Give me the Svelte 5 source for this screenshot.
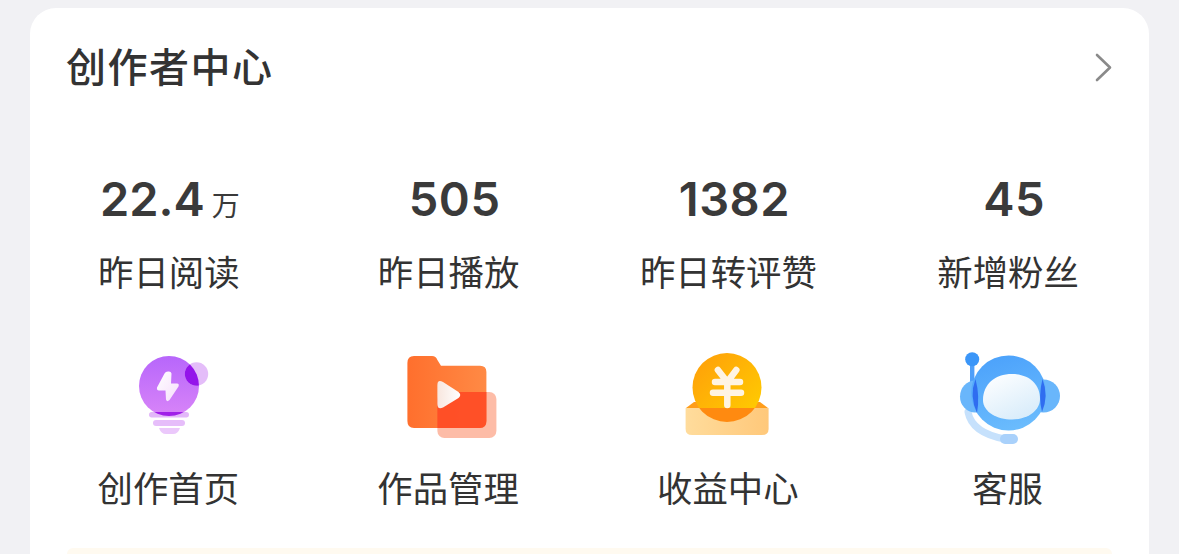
<script>
  const stats = [
    { value: '22.4', unit: '万', label: '昨日阅读' },
    { value: '505', label: '昨日播放' },
    { value: '1382', label: '昨日转评赞' },
    { value: '45', label: '新增粉丝' }
  ];
</script>

<div class="page">
  <section class="card">
    <header class="head">
      <h2>创作者中心</h2>
      <svg class="arrow" width="20" height="32" viewBox="0 0 20 32" fill="none">
        <path d="M3 3 L16 15.5 L3 28" stroke="#8a8a8a" stroke-width="2.6" stroke-linecap="round" stroke-linejoin="round" />
      </svg>
    </header>

    <div class="stats">
      {#each stats as s}
        <div class="stat">
          <div class="num" class:plain={!s.unit}>{s.value}{#if s.unit}<span class="unit">{s.unit}</span>{/if}</div>
          <div class="label">{s.label}</div>
        </div>
      {/each}
    </div>

    <div class="tools">
      <div class="tool">
        <svg width="80" height="100" viewBox="0 0 80 100">
          <defs>
            <linearGradient id="bulb" x1="0" y1="0" x2="0" y2="1">
              <stop offset="0" stop-color="#b766fb" />
              <stop offset="1" stop-color="#d884f8" />
            </linearGradient>
            <linearGradient id="bolt" x1="0" y1="0" x2="1" y2="1">
              <stop offset="0" stop-color="#ffffff" />
              <stop offset="1" stop-color="#f6ddfc" />
            </linearGradient>
            <clipPath id="bulbClip"><circle cx="39" cy="36" r="30" /></clipPath>
          </defs>
          <circle cx="39" cy="36" r="30" fill="url(#bulb)" />
          <circle cx="66.5" cy="24" r="11.7" fill="#e4bdf9" />
          <g clip-path="url(#bulbClip)"><circle cx="66.5" cy="24" r="11.7" fill="#9414ea" /></g>
          <path d="M34.5 23.5 L27 37.5 Q26.5 40.5 29 40.5 H35.5 L36 49.5 Q37 52.5 39.5 50 L48.5 36.5 Q49.5 33.5 47 33.5 H41 L41.5 23.5 Q41 21 38 21.5 Q35.5 21.5 34.5 23.5Z" fill="url(#bolt)" />
          <rect x="19" y="62" width="40" height="5.5" rx="2.7" fill="#e3b8f9" />
          <g clip-path="url(#bulbClip)"><rect x="19" y="62" width="40" height="5.5" fill="#a020e8" /></g>
          <rect x="23" y="70" width="32" height="6" rx="3" fill="#e6bdfa" />
          <path d="M29 78 H50 Q48 84 43 84 H36 Q31 84 29 78Z" fill="#ebc8fb" />
        </svg>
        <span>创作首页</span>
      </div>

      <div class="tool">
        <svg width="96" height="100" viewBox="0 0 96 100">
          <defs>
            <linearGradient id="folder" x1="0" y1="0" x2="1" y2="0">
              <stop offset="0" stop-color="#ff6f2d" />
              <stop offset="1" stop-color="#ff8a45" />
            </linearGradient>
            <linearGradient id="play" x1="0" y1="0" x2="1" y2="0">
              <stop offset="0" stop-color="#f8e6de" />
              <stop offset="1" stop-color="#ffffff" />
            </linearGradient>
            <clipPath id="folderClip">
              <path d="M5.4 13 Q5.4 6 12 6 H30 Q34 6 35.4 10 L39 15.7 H78 Q84.4 15.7 84.4 22 V71 Q84.4 78 78 78 H12 Q5.4 78 5.4 71Z" />
            </clipPath>
          </defs>
          <path d="M5.4 13 Q5.4 6 12 6 H30 Q34 6 35.4 10 L39 15.7 H78 Q84.4 15.7 84.4 22 V71 Q84.4 78 78 78 H12 Q5.4 78 5.4 71Z" fill="url(#folder)" />
          <rect x="35.4" y="42" width="59" height="46" rx="7" fill="#fb6a3c" opacity="0.45" />
          <g clip-path="url(#folderClip)"><rect x="35.4" y="42" width="59" height="46" rx="7" fill="#ff4320" opacity="0.75" /></g>
          <path d="M35.4 35 Q35.4 29 41 32 L56.5 42 Q60 45 56.5 48 L41 57.5 Q35.4 60 35.4 54Z" fill="url(#play)" />
        </svg>
        <span>作品管理</span>
      </div>

      <div class="tool">
        <svg width="90" height="100" viewBox="0 0 90 100">
          <defs>
            <linearGradient id="coin" x1="0" y1="0" x2="1" y2="1">
              <stop offset="0" stop-color="#ff9d0a" />
              <stop offset="1" stop-color="#ffd000" />
            </linearGradient>
            <linearGradient id="tray" x1="0" y1="0" x2="1" y2="0">
              <stop offset="0" stop-color="#ffdc9c" />
              <stop offset="1" stop-color="#ffc87a" />
            </linearGradient>
            <clipPath id="trayClip">
              <rect x="1.6" y="58" width="83" height="27" />
            </clipPath>
          </defs>
          <path d="M2 58 L10 52 H76 L84 58Z" fill="#ff9d1a" />
          <circle cx="43" cy="37.5" r="34.5" fill="url(#coin)" />
          <path d="M1.6 58 H84.6 V79 Q84.6 85 78 85 H8 Q1.6 85 1.6 79Z" fill="url(#tray)" />
          <g clip-path="url(#trayClip)"><circle cx="43" cy="37.5" r="34.5" fill="#ff8a10" /></g>
          <path d="M33.9 20 L43.3 32 L52.3 20 M31 32 H56 M29 42.7 H57 M43.3 32 V55" fill="none" stroke="#fff4e2" stroke-width="6.5" stroke-linecap="round" stroke-linejoin="round" />
        </svg>
        <span>收益中心</span>
      </div>

      <div class="tool">
        <svg width="104" height="100" viewBox="0 0 104 100">
          <defs>
            <linearGradient id="head" x1="0.3" y1="0" x2="0.6" y2="1">
              <stop offset="0" stop-color="#4ca2fb" />
              <stop offset="1" stop-color="#6bbcfd" />
            </linearGradient>
            <linearGradient id="face" x1="0.2" y1="0" x2="0.8" y2="1">
              <stop offset="0" stop-color="#fdfeff" />
              <stop offset="1" stop-color="#d6ebfa" />
            </linearGradient>
          </defs>
          <path d="M11 62 Q15 83 48 89" fill="none" stroke="#c6e1fc" stroke-width="7" stroke-linecap="round" />
          <path d="M48 89 H56" fill="none" stroke="#a9d1fb" stroke-width="10" stroke-linecap="round" />
          <rect x="13" y="9" width="4.4" height="24" fill="#4f9ff9" />
          <circle cx="15.2" cy="9.3" r="7" fill="#3b96f8" />
          <ellipse cx="18" cy="46.5" rx="15" ry="16" fill="#69b6fb" />
          <ellipse cx="86.5" cy="46" rx="16.5" ry="16.5" fill="#69b6fb" />
          <circle cx="51.6" cy="43" r="37.5" fill="url(#head)" />
          <path d="M18.5 29 Q12 46 20 63 Q23 46 18.5 29Z" fill="#2f6df0" />
          <path d="M85.5 29 Q92 46 85 62 Q81 46 85.5 29Z" fill="#2f6df0" />
          <path d="M26 50 C26 34 38 24 55 24 C72 24 83 34 83 49 C83 61 70 69.500 55 69.500 C40 69.500 26 62 26 50Z" fill="url(#face)" />
        </svg>
        <span>客服</span>
      </div>
    </div>

    <div class="banner"></div>
  </section>
</div>

<style>
  :global(body) {
    margin: 0;
    background: #f1f1f4;
    overflow: hidden;
  }

  .page {
    height: 554px;
    padding: 8px 30px 0;
    box-sizing: border-box;
    overflow: hidden;
    font-family: "Noto Sans CJK SC", "Noto Sans", sans-serif;
    color: #333;
  }

  .card {
    background: #fff;
    border-radius: 26px 26px 0 0;
    height: 100%;
    box-sizing: border-box;
    display: flex;
    flex-direction: column;
  }

  .head {
    display: flex;
    justify-content: space-between;
    align-items: flex-start;
    padding: 33px 35px 0 36px;
    height: 51px;
  }
  h2 {
    margin: 0;
    font-size: 40px;
    font-weight: 500;
    letter-spacing: 1.5px;
    line-height: 48px;
  }
  .arrow {
    margin-top: 11px;
  }

  .stats,
  .tools {
    display: grid;
    grid-template-columns: repeat(4, 1fr);
    text-align: center;
  }
  .stats {
    margin-top: 82px;
  }

  .num {
    font-family: Inter, "Liberation Sans", sans-serif;
    font-size: 47px;
    font-weight: 600;
    height: 56px;
    line-height: 56px;
    letter-spacing: 0;
    color: #3a3a3a;
  }
  .num.plain {
    padding-left: 10px;
    letter-spacing: 0.5px;
  }
  .unit {
    font-family: "Noto Sans CJK SC", sans-serif;
    font-size: 28px;
    font-weight: 400;
    line-height: 1;
    margin-left: 7px;
  }
  .label {
    font-size: 35.4px;
    line-height: 48px;
    margin-top: 20px;
    padding-right: 2px;
  }

  .tools {
    margin-top: 55px;
    margin-bottom: 37px;
  }
  .tool {
    display: flex;
    flex-direction: column;
    align-items: center;
  }
  .tool svg {
    flex: none;
  }
  .tool span {
    font-size: 35.4px;
    line-height: 48px;
    margin-top: 13px;
    padding-right: 3px;
  }

  .banner {
    margin: 0 37px;
    height: 30px;
    background: #fffaf0;
    border-radius: 20px 20px 0 0;
  }
</style>
